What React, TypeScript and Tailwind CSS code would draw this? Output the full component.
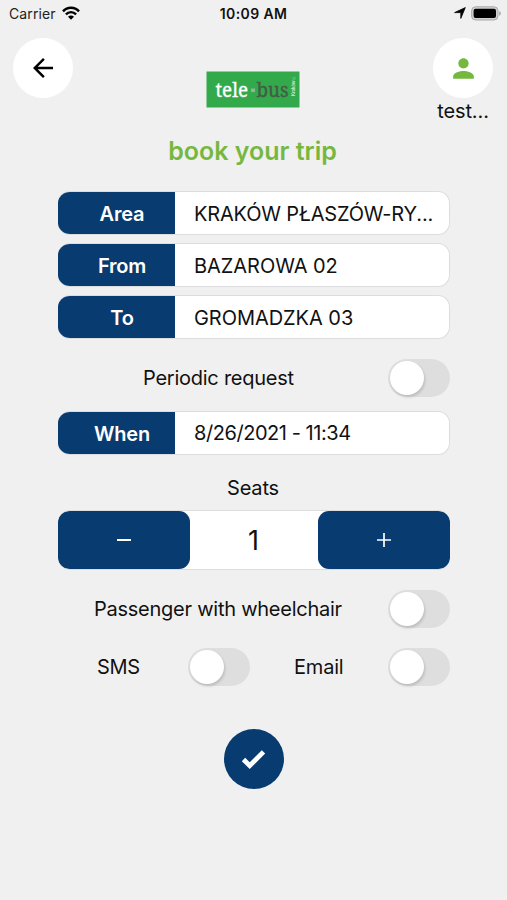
import { ReactNode } from "react";
import { MdArrowBack, MdPerson } from "react-icons/md";

const Toggle = () => {
  return (
    <button className="flex h-[38px] w-[62px] shrink-0 items-center rounded-full bg-[#dedede] pl-[2px]">
      <span className="size-[34px] rounded-full bg-white shadow-[1px_2px_3px_rgba(0,0,0,0.16)]" />
    </button>
  );
};

const Field = ({ label, children }: { label: string; children: ReactNode }) => {
  return (
    <div className="flex h-[44px] items-stretch overflow-hidden rounded-[12px] border border-l-0 border-[#dcdddf] bg-white">
      <div className="flex w-[117px] shrink-0 items-center justify-center bg-[#083b70] pl-[11px] pt-[2px] font-semibold tracking-[-0.2px] text-white">
        {label}
      </div>
      <div className="flex items-center whitespace-nowrap pl-[19px] pt-[2px]">{children}</div>
    </div>
  );
};

const StatusBar = () => {
  return (
    <div className="grid h-[28px] grid-cols-3 items-center px-[9px] text-[14px] leading-none">
      <div className="flex items-center gap-[7px]">
        <span className="text-[14px] tracking-[0.1px] text-[#222]">Carrier</span>
        <svg width="18" height="14" viewBox="0 0 18 14" fill="none" stroke="#000" className="-mt-[2px] -ml-[1px]">
          <path d="M1 5.3C5.4 0.6 12.6 0.6 17 5.3" strokeWidth="2.5" />
          <path d="M3.9 8.4C6.8 5.4 11.2 5.4 14.1 8.4" strokeWidth="2.4" />
          <path d="M9 13.8L6 10.7C7.6 9.2 10.4 9.2 12 10.7Z" fill="#000" stroke="none" />
        </svg>
      </div>
      <span className="text-center font-semibold tracking-[0.4px] text-[#111]">10:09 AM</span>
      <div className="-mr-[4px] -mt-[2px] flex items-center justify-end gap-[5px]">
        <svg width="12" height="12" viewBox="0 0 12 12">
          <path d="M11.3 0.6L6.8 11.4V5.6H0.6Z" fill="#000" stroke="#000" strokeWidth="0.8" strokeLinejoin="round" />
        </svg>
        <svg width="31" height="15" viewBox="0 0 31 15">
          <rect x="0.6" y="0.8" width="26.4" height="13.2" rx="4" fill="#d0d0d0" stroke="#aaa" />
          <rect x="2.6" y="2.8" width="22.4" height="9.2" rx="2" fill="#000" />
          <path d="M28.2 5V9.8C30.5 9 30.5 5.8 28.2 5Z" fill="#aaa" />
        </svg>
      </div>
    </div>
  );
};

const Logo = () => {
  return (
    <svg width="94" height="37" viewBox="0 0 94 37" className="mt-[33px]">
      <rect x="0.5" y="0.5" width="93" height="36" fill="#32aa4b" />
      <g fontFamily="'Noto Serif', 'Liberation Serif', serif" fontSize="20" strokeWidth="0.35">
        <text x="9.5" y="25.5" fill="#fff" stroke="#fff" textLength="32.5" lengthAdjust="spacingAndGlyphs">
          tele
        </text>
        <text x="50.5" y="25.5" fill="#445b45" stroke="#445b45" textLength="32" lengthAdjust="spacingAndGlyphs">
          bus
        </text>
      </g>
      <rect x="45" y="17.5" width="4" height="3.6" fill="#8fb592" />
      <text
        transform="translate(88.8 25) rotate(-90)"
        fontFamily="Inter, sans-serif"
        fontSize="4.6"
        fontWeight="600"
        fill="#c8ebcd"
        textLength="19"
      >
        Kraków ⌂
      </text>
    </svg>
  );
};

const App = () => {
  return (
    <div className="flex h-[900px] w-full flex-col overflow-hidden bg-[#f0f0f0] font-['Inter','Noto_Sans',sans-serif] text-[20px] leading-none text-[#111]">
      <StatusBar />
      <header className="flex h-[98px] items-start justify-between pl-[13px] pr-[14px] pt-[10px]">
        <button className="flex size-[60px] items-center justify-center rounded-full bg-white">
          <MdArrowBack className="size-[30px] text-black" />
        </button>
        <Logo />
        <div className="flex w-[60px] flex-col items-center">
          <span className="flex size-[60px] items-center justify-center rounded-full bg-white">
            <MdPerson className="size-[31px] text-[#76b83f]" />
          </span>
          <span className="mt-[3px] whitespace-nowrap tracking-[-0.1px]">test...</span>
        </div>
      </header>

      <h1 className="mt-[13px] pr-[2px] text-center text-[25px] font-semibold leading-[25px] text-[#76b83f]">
        book your trip
      </h1>

      <main className="ml-[58px] mt-[27px] flex w-[392px] flex-col">
        <div className="flex flex-col gap-[8px]">
          <Field label="Area">
            <span className="tracking-[-0.17px]">KRAKÓW PŁASZÓW-RY...</span>
          </Field>
          <Field label="From">
            <span className="tracking-[-0.05px]">BAZAROWA 02</span>
          </Field>
          <Field label="To">
            <span className="tracking-[-0.05px]">GROMADZKA 03</span>
          </Field>
        </div>

        <div className="mt-[20px] flex items-center justify-between pl-[85px]">
          <span className="tracking-[-0.25px]">Periodic request</span>
          <Toggle />
        </div>

        <div className="mt-[14px]">
          <Field label="When">
            <span className="-mt-[2px] tracking-[-0.45px]">8/26/2021 - 11:34</span>
          </Field>
        </div>

        <p className="mt-[23px] pr-[2px] text-center tracking-[-0.2px]">Seats</p>
        <div className="mt-[12px] flex h-[60px] items-stretch justify-between overflow-hidden rounded-[12px] border-y border-[#dcdddf] bg-white">
          <button className="flex w-[132px] items-center justify-center rounded-[11px] bg-[#083b70]">
            <svg width="16" height="16" viewBox="0 0 16 16" stroke="#fff" strokeWidth="2">
              <path d="M1 8H15" />
            </svg>
          </button>
          <span className="self-center pr-[1px] text-[27px]">1</span>
          <button className="flex w-[132px] items-center justify-center rounded-[11px] bg-[#083b70]">
            <svg width="16" height="16" viewBox="0 0 16 16" stroke="#fff" strokeWidth="1.7">
              <path d="M1 8H15M8 1V15" />
            </svg>
          </button>
        </div>

        <div className="mt-[20px] flex items-center justify-between pl-[36px]">
          <span className="tracking-[-0.25px]">Passenger with wheelchair</span>
          <Toggle />
        </div>
        <div className="mt-[20px] flex items-center justify-between pl-[39px]">
          <div className="flex w-[153px] items-center justify-between">
            <span className="tracking-[-0.3px]">SMS</span>
            <Toggle />
          </div>
          <div className="flex w-[156px] items-center justify-between">
            <span className="tracking-[-0.2px]">Email</span>
            <Toggle />
          </div>
        </div>

        <button className="mt-[43px] flex size-[60px] items-center justify-center self-center rounded-full bg-[#083b70]">
          <svg width="26" height="22" viewBox="0 0 26 22" fill="none" stroke="#fff" strokeWidth="4.8">
            <path d="M2.5 11.5L8.7 17.7L22.5 3.9" />
          </svg>
        </button>
      </main>
    </div>
  );
};

export default App;
